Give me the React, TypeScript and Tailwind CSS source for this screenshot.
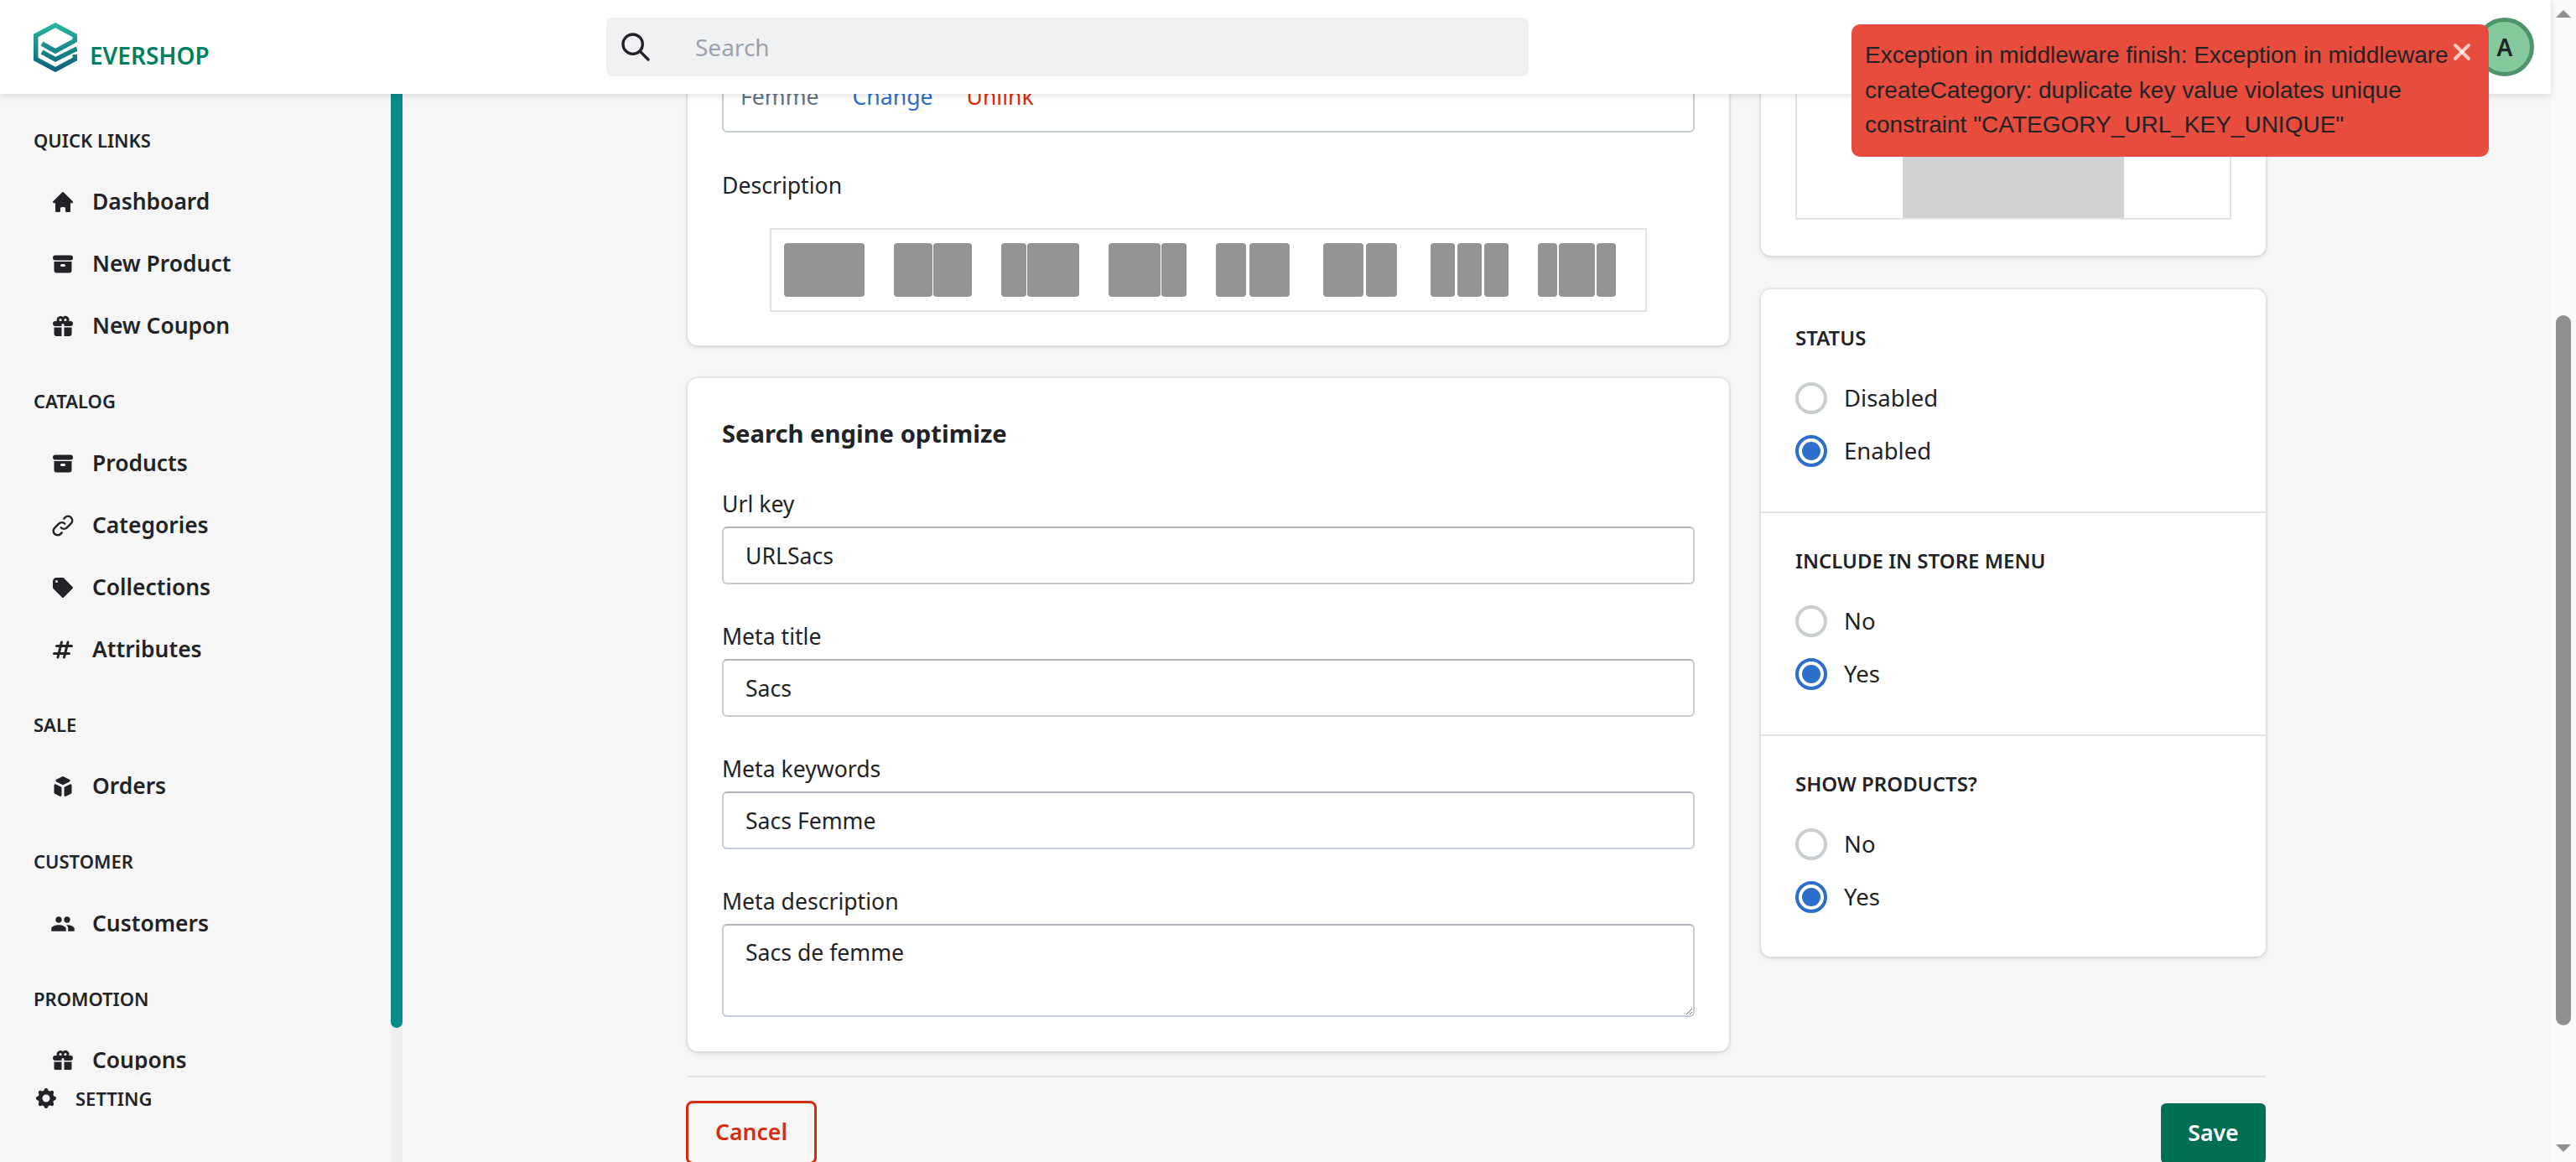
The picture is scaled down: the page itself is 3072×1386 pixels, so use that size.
import type { ComponentType } from "react";
import {
  HiHome,
  HiArchive,
  HiGift,
  HiOutlineLink,
  HiTag,
  HiHashtag,
  HiCube,
  HiCog,
  HiOutlineSearch,
} from "react-icons/hi";
import { MdPeople } from "react-icons/md";
import { X } from "lucide-react";

type NavItem = { label: string; icon: ComponentType<{ className?: string }> };

const sections: { title: string; items: NavItem[] }[] = [
  {
    title: "QUICK LINKS",
    items: [
      { label: "Dashboard", icon: HiHome },
      { label: "New Product", icon: HiArchive },
      { label: "New Coupon", icon: HiGift },
    ],
  },
  {
    title: "CATALOG",
    items: [
      { label: "Products", icon: HiArchive },
      { label: "Categories", icon: HiOutlineLink },
      { label: "Collections", icon: HiTag },
      { label: "Attributes", icon: HiHashtag },
    ],
  },
  { title: "SALE", items: [{ label: "Orders", icon: HiCube }] },
  { title: "CUSTOMER", items: [{ label: "Customers", icon: MdPeople }] },
  { title: "PROMOTION", items: [{ label: "Coupons", icon: HiGift }] },
  { title: "CMS", items: [] },
];

// the toolbar placeholder blocks in the editor, each group sits on a 131px step
const editorBlocks = [
  { width: 96, bars: [96] },
  { width: 96, bars: [46, 46] },
  { width: 96, bars: [30, 62] },
  { width: 96, bars: [62, 30] },
  { width: 91, bars: [36, 48] },
  { width: 91, bars: [48, 37] },
  { width: 96, bars: [29, 29, 29] },
  { width: 96, bars: [23, 43, 23] },
];

const Logo = () => (
  <svg width="52" height="59" viewBox="0 0 52 59" fill="none">
    <defs>
      <linearGradient id="logoTop" x1="26" y1="0" x2="26" y2="59" gradientUnits="userSpaceOnUse">
        <stop offset="0" stopColor="#27bb9c" />
        <stop offset="1" stopColor="#0c5c7e" />
      </linearGradient>
    </defs>
    <g stroke="url(#logoTop)" strokeWidth="5.5">
      <path d="M49.25 22V15.5L26 3L2.75 15.5V43.5L26 56L49.25 43.5V38" />
      <path d="M10 25L26 34L52 20" />
      <path d="M10 35L26 44L52 31" />
    </g>
  </svg>
);

const Sidebar = () => (
  <aside className="relative flex w-[480px] shrink-0">
    <nav className="flex min-w-0 flex-1 flex-col gap-[15.5px] overflow-hidden pl-[40px] pt-[18px]">
      {sections.map((section) => (
        <div key={section.title} className={section.title === "CMS" ? "text-[#212326]/5" : ""}>
          <div className="flex h-[74px] items-center text-[22px] font-semibold">{section.title}</div>
          {section.items.map((item) => (
            <a key={item.label} className="flex h-[74px] items-center pl-[20px] text-[26.4px] font-semibold">
              <span className="mr-[20px] flex w-[30px] shrink-0 justify-center">
                <item.icon className="h-[30px] w-[30px] shrink-0" />
              </span>
              {item.label}
            </a>
          ))}
        </div>
      ))}
    </nav>
    <div className="w-[14px] shrink-0 bg-[#eeeef0]">
      <div className="h-[1114px] w-full rounded-b-[8px] bg-[#088c8b]" />
    </div>
    <div className="absolute bottom-0 left-0 h-[110px] w-[466px] bg-[#f6f6f6]/95 pl-[40px] pt-[14px]">
      <a className="flex h-[40px] items-center text-[22px] font-semibold">
        <HiCog className="mr-[20px] h-[30px] w-[30px]" />
        SETTING
      </a>
    </div>
  </aside>
);

const Card = ({ className = "", children }: { className?: string; children: React.ReactNode }) => (
  <section
    className={`rounded-[12px] bg-white shadow-[0_0_0_2px_rgba(63,63,68,0.05),0_2px_6px_0_rgba(63,63,68,0.15)] ${className}`}
  >
    {children}
  </section>
);

const inputClass =
  "w-full rounded-[6px] border-2 border-[#c4cdd5] border-t-[#aeb4b9] bg-white text-[26.6px] text-[#212326] outline-none";

const Field = ({ label, value }: { label: string; value: string }) => (
  <div className="flex flex-col">
    <label className="mb-[7px] h-[40px] text-[26.6px] leading-[40px]">{label}</label>
    <input readOnly value={value} className={`h-[69px] px-[26px] ${inputClass}`} />
  </div>
);

const Radio = ({ label, checked }: { label: string; checked?: boolean }) => (
  <label className="flex h-[63px] items-center text-[27.5px]">
    {checked ? (
      <span className="mr-[20px] flex h-[38px] w-[38px] items-center justify-center rounded-full border-[4px] border-[#2c6ecb]">
        <span className="h-[22px] w-[22px] rounded-full bg-[#2c6ecb]" />
      </span>
    ) : (
      <span className="mr-[20px] h-[38px] w-[38px] rounded-full border-[4px] border-[#c9ced2]" />
    )}
    {label}
  </label>
);

const RadioGroup = ({ title, options, bordered }: { title: string; options: [string, string]; bordered?: boolean }) => (
  <div className={`px-[41px] pb-[41px] ${bordered ? "border-t-2 border-[#e1e3e5] pt-[39px]" : "pt-[40px]"}`}>
    <h3 className="mb-[22px] h-[36px] text-[24px] font-semibold leading-[36px]">{title}</h3>
    <Radio label={options[0]} />
    <Radio label={options[1]} checked />
  </div>
);

const Main = () => (
  <main className="min-w-0 flex-1 overflow-hidden pl-[340px]">
    <div className="-mt-[100px] w-[1882px]">
      <div className="grid grid-cols-[1242px_602px] gap-x-[38px]">
        <div className="flex flex-col gap-[39px]">
          <Card className="h-[400px] px-[41px]">
            <div className={`flex h-[146px] items-end gap-[40px] px-[20px] pb-[20px] ${inputClass} rounded-t-none`}>
              <span className="text-[#637381]">Femme</span>
              <a className="text-[#2c6ecb]">Change</a>
              <a className="text-[#d72c0d]">Unlink</a>
            </div>
            <div className="mt-[43px] h-[40px] text-[26.6px] leading-[40px]">Description</div>
            <div className="mx-[57px] mt-[31px] flex h-[100px] items-center border-2 border-[#e1e3e5] pl-[15px]">
              {editorBlocks.map((block, i) => (
                <div key={i} className="mr-[35px] flex justify-between" style={{ width: block.width, marginRight: 131 - block.width }}>
                  {block.bars.map((width, j) => (
                    <div key={j} className="h-[64px] rounded-[4px] bg-[#949494]" style={{ width }} />
                  ))}
                </div>
              ))}
            </div>
          </Card>
          <Card className="h-[803px] px-[41px] pt-[39px]">
            <h2 className="h-[54px] text-[29.2px] font-bold leading-[54px]">Search engine optimize</h2>
            <div className="mt-[37px] flex flex-col gap-[42px]">
              <Field label="Url key" value="URLSacs" />
              <Field label="Meta title" value="Sacs" />
              <Field label="Meta keywords" value="Sacs Femme" />
              <div className="flex flex-col">
                <label className="mb-[7px] h-[40px] text-[26.6px] leading-[40px]">Meta description</label>
                <textarea
                  readOnly
                  value="Sacs de femme"
                  className={`h-[111px] px-[26px] py-[12px] leading-[40px] ${inputClass}`}
                />
              </div>
            </div>
          </Card>
        </div>
        <div className="flex flex-col gap-[40px]">
          <Card className="h-[293px] px-[41px]">
            <div className="flex h-[250px] justify-center border-2 border-[#e1e3e5]">
              <div className="w-[264px] bg-[#d1d1d1]" />
            </div>
          </Card>
          <Card className="h-[796px]">
            <RadioGroup title="STATUS" options={["Disabled", "Enabled"]} />
            <RadioGroup title="INCLUDE IN STORE MENU" options={["No", "Yes"]} bordered />
            <RadioGroup title="SHOW PRODUCTS?" options={["No", "Yes"]} bordered />
          </Card>
        </div>
      </div>
      <div className="mt-[29px] flex items-start justify-between border-t-2 border-[#e1e3e5] pt-[28px]">
        <button className="-ml-[2px] h-[76px] w-[156px] rounded-[8px] border-[3px] border-[#d72c0d] text-[26.6px] font-semibold text-[#d72c0d]">
          Cancel
        </button>
        <button className="mt-[3px] h-[72px] w-[125px] rounded-[6px] bg-[#006e52] text-[26.6px] font-semibold text-white">
          Save
        </button>
      </div>
    </div>
  </main>
);

export default function App() {
  return (
    <div className="relative flex h-screen w-full overflow-hidden bg-[#fafafa] font-['Noto_Sans',sans-serif] text-[#212326]">
      <div className="flex min-w-0 flex-1 flex-col">
        <header className="relative z-10 flex h-[112px] shrink-0 items-center bg-white pl-[40px] shadow-[0_2px_8px_rgba(0,0,0,0.12)]">
          <div className="flex w-[683px] shrink-0 items-center">
            <Logo />
            <span className="ml-[15px] mt-[20px] text-[28px] font-semibold leading-none text-[#008060]">EVERSHOP</span>
          </div>
          <div className="flex h-[70px] w-[1100px] items-center rounded-[8px] bg-[#f0f1f3] pl-[15px]">
            <HiOutlineSearch className="h-[40px] w-[40px]" />
            <span className="ml-[51px] text-[28px] text-[#9ba3ae]">Search</span>
          </div>
          <div className="absolute right-[20px] top-[21px] flex h-[70px] w-[70px] items-center justify-center rounded-full border-[5px] border-[#4f9468] bg-[#84c89c] text-[28px] font-semibold">
            A
          </div>
        </header>
        <div className="flex min-h-0 flex-1 bg-[#f6f6f6]">
          <Sidebar />
          <Main />
        </div>
      </div>
      <div className="flex w-[30px] shrink-0 flex-col items-center justify-between py-[12px]">
        <div className="h-0 w-0 border-x-[9px] border-b-[9px] border-x-transparent border-b-[#8f8f8f]" />
        <div className="absolute right-[6px] top-[376px] h-[847px] w-[18px] rounded-full bg-[#8f8f8f]" />
        <div className="h-0 w-0 border-x-[9px] border-t-[9px] border-x-transparent border-t-[#8f8f8f]" />
      </div>
      <div className="absolute left-[2208px] top-[29px] z-20 h-[158px] w-[760px] rounded-[10px] bg-[#e74c3c] py-[16px] pl-[16px] pr-[45px] font-['Liberation_Sans',sans-serif] text-[28px] leading-[41.6px] text-[#212326]">
        Exception in middleware finish: Exception in middleware createCategory: duplicate key value violates unique
        constraint "CATEGORY_URL_KEY_UNIQUE"
        <X className="absolute right-[16px] top-[17px] h-[32px] w-[32px] text-white/70" strokeWidth={3} />
      </div>
    </div>
  );
}
